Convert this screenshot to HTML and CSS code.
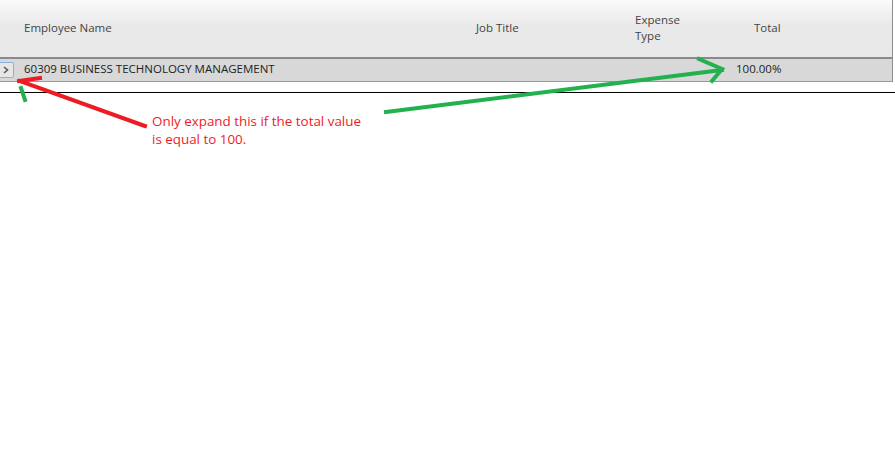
FILE: index.html
```html
<!DOCTYPE html>
<html lang="en">
<head>
<meta charset="utf-8">
<title>Expense Allocation</title>
<link rel="stylesheet" href="styles.css">
</head>
<body>
<div class="page">
  <div class="grid">
    <div class="grid-head">
      <div class="cell cell-expander"></div>
      <div class="cell col-name">Employee Name</div>
      <div class="cell col-job">Job Title</div>
      <div class="cell col-type">Expense<br>Type</div>
      <div class="cell col-total">Total</div>
    </div>
    <div class="grid-row">
      <div class="cell cell-expander">
        <button class="expander" type="button" aria-label="Expand">
          <svg width="6" height="8" viewBox="0 0 6 8"><path d="M1 1 L4.5 4 L1 7" fill="none" stroke="#5a5a5a" stroke-width="1.6"/></svg>
        </button>
      </div>
      <div class="cell col-name">60309 BUSINESS TECHNOLOGY MANAGEMENT</div>
      <div class="cell col-job"></div>
      <div class="cell col-type"></div>
      <div class="cell col-value">100.00%</div>
    </div>
  </div>
  <div class="rule"></div>
  <p class="note">Only expand this if the total value<br>is equal to 100.</p>

  <svg class="marks" width="895" height="460" viewBox="0 0 895 460">
    <g fill="none" stroke="#ed1c24" stroke-width="4" stroke-linecap="square">
      <path d="M145 126 L20 81"/>
      <path d="M19 81 L40 78"/>
    </g>
    <g fill="none" stroke="#22b14c" stroke-width="4" stroke-linecap="square">
      <path d="M21 88 L25 100"/>
      <path d="M386 112 L722 70"/>
      <path d="M699 59 L722 69 L712 81"/>
    </g>
  </svg>
</div>
</body>
</html>
```

FILE: styles.css
```css
html, body {
  margin: 0;
  padding: 0;
  background: #ffffff;
}

body {
  font-family: "Open Sans", "Noto Sans", sans-serif;
  font-size: 11.5px;
  color: #333333;
}

.page {
  position: relative;
  width: 895px;
  height: 460px;
  overflow: hidden;
}

.grid {
  width: 892px;
  border-right: 1px solid #8c8c8c;
}

.grid-head,
.grid-row {
  display: grid;
  grid-template-columns: 24px 452px 159px 101px 1fr;
}

.grid-head {
  height: 57px;
  background: linear-gradient(#fafafa, #e9e9e9 45%, #e8e8e8);
  border-bottom: 2px solid #8a8a8a;
  color: #444444;
  align-items: center;
}

.grid-head .cell {
  line-height: 16px;
  padding-bottom: 1px;
}

.col-total {
  padding-left: 18px;
}

.grid-row {
  height: 22px;
  background: #d8d8d8;
  border-bottom: 1px solid #9a9a9a;
  align-items: center;
  color: #222222;
}

.grid-row .cell {
  line-height: 16px;
  padding-bottom: 3px;
}

.grid-row .cell-expander {
  padding-bottom: 0;
}

.cell {
  white-space: nowrap;
}

.cell-expander {
  display: flex;
  align-items: center;
}

.expander {
  width: 14px;
  height: 16px;
  padding: 0 0 0 3px;
  margin: 0;
  border: 1px solid #86b2e0;
  border-left: 0;
  border-radius: 0 2px 2px 0;
  background: #e6e6e6;
  display: flex;
  align-items: center;
  justify-content: flex-start;
}

.rule {
  height: 1px;
  background: #000000;
  margin-top: 10px;
}

.note {
  margin: 19px 0 0 152px;
  font-size: 13.4px;
  line-height: 18px;
  color: #ed1c24;
}

.marks {
  position: absolute;
  left: 0;
  top: 0;
  pointer-events: none;
}
```
